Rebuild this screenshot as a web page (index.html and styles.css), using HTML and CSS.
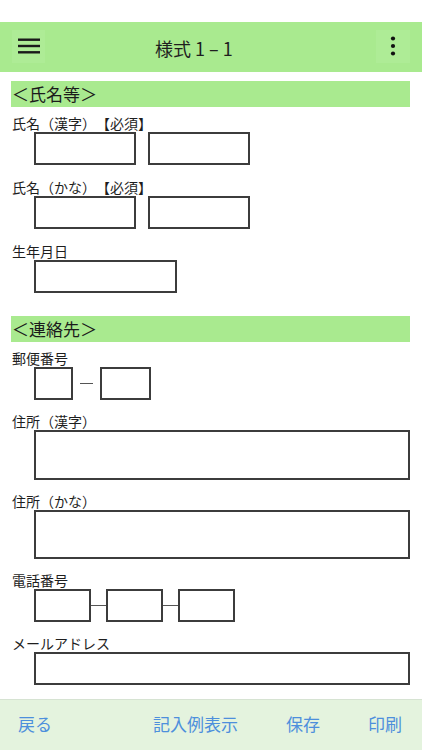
FILE: index.html
```html
<!DOCTYPE html>
<html lang="ja">
<head>
<meta charset="utf-8">
<title>様式 1 – 1</title>
<link rel="stylesheet" href="styles.css">
</head>
<body>
<div class="app">
  <div class="status"></div>
  <header class="topbar">
    <button class="icon-btn" aria-label="menu">
      <svg width="22" height="16" viewBox="0 0 22 16"><rect x="0" y="0.5" width="22" height="2.4" fill="#1a1a1a"/><rect x="0" y="6.8" width="22" height="2.4" fill="#1a1a1a"/><rect x="0" y="13.1" width="22" height="2.4" fill="#1a1a1a"/></svg>
    </button>
    <h1 class="title">様式 1 – 1</h1>
    <button class="icon-btn kebab" aria-label="more">
      <svg width="6" height="20" viewBox="0 0 6 20"><circle cx="3" cy="2.5" r="2.1" fill="#111"/><circle cx="3" cy="10" r="2.1" fill="#111"/><circle cx="3" cy="17.5" r="2.1" fill="#111"/></svg>
    </button>
  </header>

  <main class="content">
    <h2 class="section-bar">＜氏名等＞</h2>
    <div class="fields">
      <div class="field">
        <div class="label">氏名（漢字）【必須】</div>
        <div class="row"><div class="box w-name"></div><div class="box w-name"></div></div>
      </div>
      <div class="field">
        <div class="label">氏名（かな）【必須】</div>
        <div class="row"><div class="box w-name"></div><div class="box w-name"></div></div>
      </div>
      <div class="field">
        <div class="label">生年月日</div>
        <div class="row"><div class="box w-date"></div></div>
      </div>
    </div>

    <h2 class="section-bar second">＜連絡先＞</h2>
    <div class="fields tight">
      <div class="field">
        <div class="label">郵便番号</div>
        <div class="row zip"><div class="box w-zip1"></div><span class="dash wide"></span><div class="box w-zip2"></div></div>
      </div>
      <div class="field">
        <div class="label">住所（漢字）</div>
        <div class="row"><div class="box full tall"></div></div>
      </div>
      <div class="field">
        <div class="label">住所（かな）</div>
        <div class="row"><div class="box full tall2"></div></div>
      </div>
      <div class="field">
        <div class="label">電話番号</div>
        <div class="row tel"><div class="box w-tel"></div><span class="dash"></span><div class="box w-tel"></div><span class="dash"></span><div class="box w-tel"></div></div>
      </div>
      <div class="field">
        <div class="label">メールアドレス</div>
        <div class="row"><div class="box full"></div></div>
      </div>
    </div>
  </main>

  <footer class="bottombar">
    <a class="bb-item">戻る</a>
    <div class="bb-right">
      <a class="bb-item">記入例表示</a>
      <a class="bb-item">保存</a>
      <a class="bb-item">印刷</a>
    </div>
  </footer>
</div>
</body>
</html>
```

FILE: styles.css
```css
* { box-sizing: border-box; }
html, body { margin: 0; padding: 0; background: #fff; }
body {
  font-family: "Noto Sans CJK JP", "Noto Sans", sans-serif;
  color: #1e1e1e;
  text-spacing-trim: space-all;
}
.app {
  width: 422px;
  height: 750px;
  display: flex;
  flex-direction: column;
  overflow: hidden;
}
.status { height: 22px; background: #fff; flex: none; }
.topbar {
  flex: none;
  height: 50px;
  background: #a9ea8f;
  display: flex;
  align-items: center;
  padding: 0 12px;
}
.icon-btn {
  flex: none;
  width: 33px;
  height: 33px;
  border: 0;
  padding: 0;
  margin: -2px 0 0 0;
  background: #aeec96;
  display: flex;
  align-items: center;
  justify-content: center;
}
.kebab { width: 34px; }
.title {
  flex: 1;
  margin: 2px 0 0 110px;
  font-size: 18px;
  font-weight: 400;
  line-height: 24px;
  color: #1f1f1f;
  white-space: pre;
}
.content {
  flex: 1;
  padding: 9px 12px 0 11px;
}
.section-bar {
  margin: 0;
  height: 26px;
  background: #a9ea8f;
  font-size: 17px;
  font-weight: 400;
  line-height: 26px;
  padding-left: 1px;
  color: #1b1b1b;
}
.section-bar.second { margin-top: 23px; }
.fields {
  display: flex;
  flex-direction: column;
  gap: 14px;
  margin-top: 8px;
}
.fields.tight { gap: 13px; }
.label {
  font-size: 14px;
  line-height: 17px;
  height: 17px;
  padding-left: 1px;
  color: #1e1e1e;
  white-space: nowrap;
}
.row {
  display: flex;
  align-items: center;
  gap: 12px;
  padding-left: 23px;
}
.box {
  height: 33px;
  border: 2px solid #3c3c3c;
  background: #fff;
}
.w-name { width: 102px; }
.w-date { width: 143px; }
.w-zip1 { width: 39px; }
.w-zip2 { width: 51px; }
.w-tel { width: 57px; }
.full { flex: 1; }
.tall { height: 50px; }
.tall2 { height: 49px; }
.row.zip { gap: 7px; }
.row.tel { gap: 0; }
.dash {
  display: block;
  width: 15px;
  height: 1.5px;
  background: #555;
}
.dash.wide { width: 13px; }
.bottombar {
  flex: none;
  height: 51px;
  background: #e4f3de;
  border-top: 1px solid #d6e3d2;
  display: flex;
  align-items: center;
  justify-content: space-between;
  padding: 0 20px 2px 18px;
}
.bb-right {
  display: flex;
  gap: 48px;
}
.bb-item {
  font-size: 17px;
  line-height: 24px;
  color: #4d8fdc;
  text-decoration: none;
}
```
